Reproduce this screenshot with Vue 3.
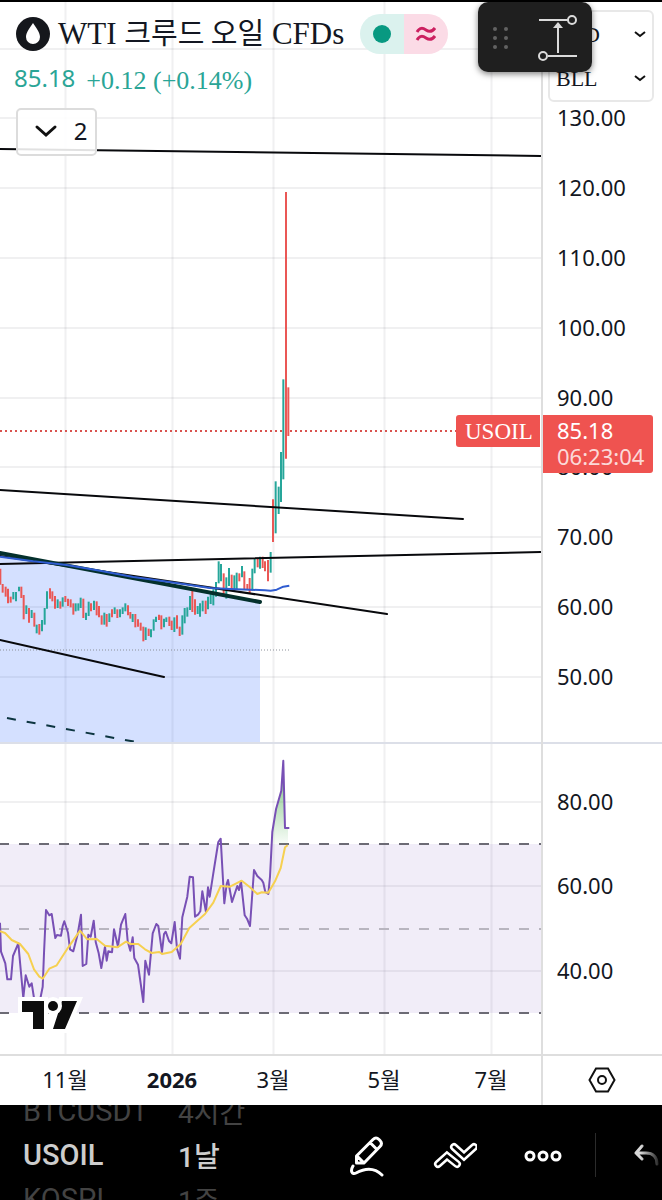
<script setup>
const prices = [130, 120, 110, 100, 90, 80, 70, 60, 50]
const priceY = (p) => Math.round(118.4 + (130 - p) * 6.98)
const rsiLevels = [80, 60, 40]
const rsiY = (v) => Math.round(844 + (70 - v) * 4.23)
const months = [
  { x: 65, label: '11월' },
  { x: 172, label: '2026', strong: true },
  { x: 273, label: '3월' },
  { x: 384, label: '5월' },
  { x: 491, label: '7월' },
]

// Series samples are stored in thirds of a chart unit, relative to an origin.
const bars = (text, ox, oy) =>
  text.split(';').map((row) => {
    const [side, x, high, low] = row.trim().split(' ')
    return { up: side === 'g', x: ox + x / 3, high: oy + high / 3, low: oy + low / 3 }
  })
const points = (text, ox, oy) =>
  text.trim().split(' ').map((p) => {
    const [x, y] = p.split(',').map(Number)
    return `${(ox + x / 3).toFixed(1)},${(oy + y / 3).toFixed(1)}`
  })

const candles = [
  ...bars('r 1 116 164;r 8 162 188;r 17 170 200;r 24 176 220;r 32 200 218;g 40 186 208;g 48 186 214;g 57 170 184;r 64 170 204;r 71 195 268;g 79 226 252;r 87 234 278;g 95 240 264;r 103 248 290;g 110 284 310;r 118 282 314;g 126 270 304;g 134 234 284;g 141 184 236;r 150 175 206;r 157 184 214;r 165 198 236;g 173 208 234;r 181 214 236;g 188 202 230;r 196 198 216;r 204 206 228;r 212 208 232;r 220 220 254;g 227 220 244;g 235 220 242;g 242 203 234;r 250 206 264;g 258 248 270;g 266 215 258;r 273 220 244;g 282 212 240;r 290 214 256;r 297 228 262;r 305 256 284;g 313 248 284;r 320 252 290;g 328 250 276;r 336 238 262;g 344 232 252;r 352 238 264;g 360 238 262;g 368 232 252;g 376 220 244;r 384 226 256;r 391 246 266;g 398 252 276;r 406 252 292;r 414 268 290;r 422 278 302;r 430 290 334;g 437 292 330;r 446 296 318', 0, 530),
  ...bars('g 3 298 322;g 11 268 302;g 18 260 276;r 27 254 270;r 34 256 298;g 42 266 292;g 49 262 276;r 58 260 288;r 65 272 300;g 73 262 306;r 81 256 296;r 89 290 318;g 97 256 314;g 104 234 280;g 112 232 260;g 120 198 240;r 127 182 246;r 135 208 254;g 143 228 252;g 150 220 260;g 158 212 244;r 167 212 252;g 174 200 238;g 182 190 222;g 190 178 226;g 198 156 200;g 206 94 160;g 213 102 154;r 221 130 198;g 229 142 206;g 237 114 168;r 245 134 182;g 253 136 182;g 260 128 180;r 268 130 154;g 276 108 142;r 283 124 178;r 292 162 180;r 299 144 190;g 307 116 182;g 314 86 130;r 323 84 112;g 330 80 116;r 338 80 114;r 345 94 124;r 354 90 154;g 362 66 128', 150, 530),
  ...bars('r 219 958 1086;g 227 904 1060;g 236 920 1002;g 243 816 966;g 250 598 898;r 258 36 836;r 265 622 768', 200, 180),
]

const average = [
  ...points('0,80 100,94 200,105 300,122 400,141', 0, 530),
  ...points('0,148 100,162 180,174 240,177 300,179 345,181 362,182 380,179 400,170 418,167', 150, 530),
].join(' ')

const rsi = [
  ...points('0,248 3,335 16,370 22,418 33,418 39,348 55,310 70,474 77,406 88,440 95,430 102,474 108,500 118,490 122,470 128,440 132,340 138,210 148,226 155,222 166,294 171,285 183,287 188,258 193,244 204,278 210,328 220,334 233,282 243,224 248,378 259,372 265,284 272,290 281,242 287,306 296,340 304,384 315,320 320,362 325,334 336,337 342,268 354,320 363,254 376,222 383,304 391,332 398,292 403,354 414,374 430,486 436,362 447,404', 0, 840),
  ...points('8,550 19,522 25,528 36,606 42,552 47,545 57,573 64,580 74,516 81,596 90,626 97,502 112,440 119,380 129,382 135,500 144,494 151,484 157,424 168,486 174,412 179,440 190,370 205,276 212,266 223,460 230,402 234,390 246,456 262,408 267,420 273,394 284,496 291,506 300,528 312,360 322,378 335,390 340,398 346,426 355,432 360,380 367,246 378,178 394,122 400,32 405,234 418,234', 150, 750),
].join(' ')

const rsiAverage = [
  ...points('0,274 15,279 35,300 60,312 85,342 102,388 118,410 128,416 148,386 170,376 205,322 240,272 262,298 290,297 315,317 340,320 352,322 378,305 392,312 415,312 435,328', 0, 840),
  ...points('5,609 28,606 36,612 65,606 92,582 118,534 165,492 190,458 212,408 240,410 275,392 300,412 322,432 335,427 355,428 375,394 392,354 405,292 413,286', 150, 750),
].join(' ')

const overbought = points('364,282 367,246 378,178 394,122 400,32 405,234 414,234 414,282', 150, 750).join(' ')
</script>

<template>
  <div class="app">
    <main class="board">
      <svg class="chart" viewBox="0 0 662 1103" role="img" aria-label="WTI 크루드 오일 CFDs">
        <defs>
          <linearGradient id="heat" x1="0" y1="0" x2="0" y2="1">
            <stop offset="0" stop-color="#4caf50" stop-opacity=".8" />
            <stop offset="1" stop-color="#4caf50" stop-opacity=".04" />
          </linearGradient>
          <clipPath id="plot"><rect x="0" y="0" width="541" height="1054" /></clipPath>
        </defs>
        <g transform="translate(0 -2)">
          <g clip-path="url(#plot)">
            <g class="grid">
              <line v-for="m in months" :key="m.x" :x1="m.x + .5" :x2="m.x + .5" y1="0" y2="1054" />
              <line v-for="p in prices" :key="p" x1="0" x2="541" :y1="priceY(p)" :y2="priceY(p)" />
              <line x1="0" x2="541" y1="49" y2="49" />
              <line v-for="v in rsiLevels" :key="v" x1="0" x2="541" :y1="rsiY(v)" :y2="rsiY(v)" />
            </g>
            <polygon class="zone" points="0,553 260,602 260,743 0,743" />
            <line class="low-dots" x1="0" y1="650" x2="290" y2="650" />
            <line class="price-dots" x1="0" y1="431" x2="456" y2="431" />
            <g>
              <line v-for="(c, i) in candles" :key="i" :class="c.up ? 'up' : 'down'" :x1="c.x" :x2="c.x" :y1="c.high" :y2="c.low" />
            </g>
            <g class="trend">
              <line x1="0" y1="149" x2="541" y2="156" />
              <line x1="0" y1="490" x2="463" y2="519" />
              <line x1="0" y1="564" x2="541" y2="552" />
              <line x1="0" y1="556" x2="387" y2="614" />
              <line x1="0" y1="640" x2="164" y2="677" />
              <line class="dash" x1="7" y1="718" x2="136" y2="742" />
            </g>
            <line class="thick" x1="0" y1="553" x2="260" y2="602" />
            <polyline class="average" :points="average" />

            <rect class="band" x="0" y="844" width="541" height="169" />
            <line class="limit" x1="-11" x2="541" y1="844" y2="844" />
            <line class="limit mid" x1="-11" x2="541" y1="929" y2="929" />
            <line class="limit" x1="-11" x2="541" y1="1013" y2="1013" />
            <polygon class="heat" :points="overbought" />
            <polyline class="rsi" :points="rsi" />
            <polyline class="rsi-average" :points="rsiAverage" />
          </g>

          <line class="split" x1="0" x2="662" y1="743" y2="743" />
          <line class="edge" x1="0" x2="662" y1="1055" y2="1055" />
          <line class="edge" x1="542" x2="542" y1="0" y2="1105" />

          <g class="axis">
            <text v-for="p in prices" :key="p" x="557" :y="priceY(p) + 8">{{ p.toFixed(2) }}</text>
            <text v-for="v in rsiLevels" :key="v" x="557" :y="rsiY(v) + 8">{{ v.toFixed(2) }}</text>
            <text v-for="m in months" :key="m.x" class="month" :class="{ strong: m.strong }" :x="m.x" y="1088">{{ m.label }}</text>
          </g>

          <path class="tag" d="M540 415v32h-81a3 3 0 0 1-3-3v-26a3 3 0 0 1 3-3z" />
          <path class="tag" d="M543 415h107a3 3 0 0 1 3 3v52a3 3 0 0 1-3 3h-107z" />
          <text class="tag-name" x="465" y="439">USOIL</text>
          <text class="tag-price" x="557" y="439">85.18</text>
          <text class="tag-price soft" x="557" y="465">06:23:04</text>

          <g class="brand">
            <path d="M22 1001h22v28h-11v-17h-11zM62 1001h15l-12 28h-12z" />
            <circle cx="53" cy="1006" r="5" />
          </g>
        </g>
      </svg>

      <header class="legend">
        <div class="title-row">
          <svg class="drop" viewBox="0 0 34 34" aria-hidden="true">
            <circle cx="17" cy="17" r="17" fill="#15171c" />
            <path d="M17 6c3 5 7 9 7 14a7 7 0 0 1-14 0c0-5 4-9 7-14z" fill="#fff" />
          </svg>
          <h1>WTI <span>크루드 오일</span> CFDs</h1>
          <div class="status">
            <span class="open"><i></i></span>
            <span class="delayed">
              <svg viewBox="0 0 22 18" aria-hidden="true"><path d="M2 7c3-5 6-4 9-2s6 2 9-2M2 15c3-5 6-4 9-2s6 2 9-2" /></svg>
            </span>
          </div>
        </div>
        <p class="quote"><span class="last">85.18</span><span class="change">+0.12 (+0.14%)</span></p>
        <button class="collapse" type="button">
          <svg viewBox="0 0 24 14" aria-hidden="true"><path d="M3 3l9 8 9-8" /></svg>2
        </button>
      </header>

      <div class="units">
        <label>
          <select aria-label="통화"><option>USD</option></select>
          <svg viewBox="0 0 12 8" aria-hidden="true"><path d="M1 2l5 4 5-4" /></svg>
        </label>
        <label>
          <select aria-label="단위"><option>BLL</option></select>
          <svg viewBox="0 0 12 8" aria-hidden="true"><path d="M1 2l5 4 5-4" /></svg>
        </label>
      </div>

      <div class="float">
        <svg class="grip" viewBox="0 0 16 24" aria-hidden="true">
          <g fill="#626262">
            <circle cx="3" cy="3" r="2" /><circle cx="14" cy="3" r="2" />
            <circle cx="3" cy="12" r="2" /><circle cx="14" cy="12" r="2" />
            <circle cx="3" cy="21" r="2" /><circle cx="14" cy="21" r="2" />
          </g>
        </svg>
        <button type="button" aria-label="가격 범위">
          <svg viewBox="0 0 40 46" aria-hidden="true">
            <g fill="none" stroke="#dbdbdb" stroke-width="2">
              <path d="M1 5h29M10 41h29M20 38V10" />
              <circle cx="34" cy="5" r="4" /><circle cx="5" cy="41" r="4" />
            </g>
            <path d="M20 7l5 6H15z" fill="#dbdbdb" />
          </svg>
        </button>
      </div>

      <button class="settings" type="button" aria-label="설정">
        <svg viewBox="0 0 28 26" aria-hidden="true">
          <path d="M8 1.500h12L26.500 13 20 24.500H8L1.500 13z" /><circle cx="14" cy="13" r="4" />
        </svg>
      </button>
    </main>

    <footer class="toolbar">
      <div class="wheel symbols">
        <button type="button">BTCUSDT</button>
        <button type="button" class="current">USOIL</button>
        <button type="button">KOSPI</button>
      </div>
      <div class="wheel">
        <button type="button">4시간</button>
        <button type="button" class="current">1날</button>
        <button type="button">1주</button>
      </div>
      <div class="tools">
        <button type="button" aria-label="그리기">
          <svg width="36" height="42" viewBox="0 0 36 42">
            <path d="M7.500 21L24 4.500q3-3 6 0l1 1q3 3 0 6L15 28H7.500zM21 7.500l7 7M8 21l7 7M4 31c-3 5-1 9 3 7 9-5 18-6 26 2" />
          </svg>
        </button>
        <button type="button" aria-label="지표">
          <svg class="waves" width="44" height="28" viewBox="0 0 44 28">
            <path class="outer" d="M5 22l9-8 10 8" /><path class="inner" d="M5 22l9-8 10 8" />
            <path class="outer" d="M21 5l10 9 10-9" /><path class="inner" d="M21 5l10 9 10-9" />
          </svg>
        </button>
        <button type="button" aria-label="더보기">
          <svg width="38" height="14" viewBox="0 0 38 14">
            <circle cx="6" cy="7" r="4" /><circle cx="19" cy="7" r="4" /><circle cx="32" cy="7" r="4" />
          </svg>
        </button>
      </div>
      <div class="history">
        <button type="button" aria-label="실행 취소">
          <svg width="26" height="22" viewBox="0 0 26 22">
            <defs>
              <linearGradient id="fade" gradientUnits="userSpaceOnUse" x1="0" y1="0" x2="26" y2="0">
                <stop offset=".3" stop-color="#d8d8d8" /><stop offset="1" stop-color="#222" />
              </linearGradient>
            </defs>
            <path class="undo" d="M9 2L3 9l6 6M3 9h10c7 0 11 4 11 11" />
          </svg>
        </button>
      </div>
    </footer>
  </div>
</template>

<style>
body { margin: 0; background: #000; }
</style>

<style scoped>
.app { display: flex; flex-direction: column; min-height: 100vh; background: #000; color: #131722; font-family: "Noto Sans", "Noto Sans CJK KR", sans-serif; box-sizing: border-box; padding-top: 2px; }
button { border: 0; padding: 0; background: none; color: inherit; font: inherit; display: flex; align-items: center; justify-content: center; }
.board { position: relative; background: #fff; }
.chart { display: block; width: 100%; height: auto; }
.grid line { stroke: #2a2e39; stroke-opacity: .07; stroke-width: 2; }
.zone { fill: #2962ff; fill-opacity: .2; }
.up, .down { stroke-width: 2; }
.up { stroke: #26a69a; }
.down { stroke: #ea5755; }
.low-dots { stroke: #8b9099; stroke-width: 1; stroke-dasharray: 1 2; }
.price-dots { stroke: #d9544f; stroke-width: 2; stroke-dasharray: 2 3; }
.trend line { stroke: #08090c; stroke-width: 2; stroke-linecap: round; }
.trend .dash { stroke: #0c3540; stroke-dasharray: 9 11; stroke-linecap: butt; }
.thick { stroke: #04302c; stroke-width: 4; stroke-linecap: round; }
.average { fill: none; stroke: #2f5cd0; stroke-width: 2; stroke-linejoin: round; }
.band { fill: #7e57c2; fill-opacity: .11; }
.limit { stroke: #6c6b75; stroke-width: 2; stroke-dasharray: 10 10; stroke-dashoffset: -10; }
.limit.mid { stroke: #b8b5bf; }
.heat { fill: url(#heat); }
.rsi, .rsi-average { fill: none; stroke: #7850b5; stroke-width: 2; stroke-linejoin: round; }
.rsi-average { stroke: #f6d050; }
.split { stroke: #dcdfe8; stroke-width: 2; }
.edge { stroke: #dedede; stroke-width: 2; }
.axis { font-size: 22px; fill: #131722; }
.month { text-anchor: middle; }
.strong { font-weight: 700; }
.tag { fill: #ef5350; }
.tag-name { font-family: "Liberation Serif", serif; font-size: 23px; fill: #fff; }
.tag-price { font-size: 22px; fill: #fff; }
.soft { fill-opacity: .8; }
.brand { fill: #0d0d0d; stroke: #fff; stroke-width: 8; paint-order: stroke; }

.legend { position: absolute; top: 12px; left: 16px; }
.title-row { display: flex; align-items: center; height: 40px; }
.drop { width: 34px; height: 34px; margin-right: 8px; }
h1 { margin: 0; font: 400 31px/40px "Liberation Serif", "Noto Sans CJK KR", serif; white-space: nowrap; }
h1 span { font-family: "Noto Sans CJK KR", sans-serif; font-size: 29px; line-height: 1; }
.status { display: flex; width: 88px; height: 40px; margin-left: 16px; border-radius: 20px; overflow: hidden; }
.status span { flex: 1; display: flex; align-items: center; justify-content: center; }
.open { background: #dbf2ee; }
.open i { width: 18px; height: 18px; border-radius: 50%; background: #089981; }
.delayed { background: #fbdbe6; }
.delayed svg { width: 22px; height: 18px; fill: none; stroke: #cc2060; stroke-width: 3; }
.quote { display: flex; align-items: center; margin: 10px 0; height: 34px; color: #2aa596; }
.last { font-size: 24px; line-height: 34px; margin: -6px 11px 0 -2px; }
.change { font: 26px/34px "Liberation Serif", serif; }
.collapse { box-sizing: border-box; width: 81px; height: 48px; gap: 16px; padding-left: 8px; border: 2px solid #dcdcdc; border-radius: 5px; background: rgba(255, 255, 255, .88); font-size: 24px; line-height: 40px; padding-bottom: 2px; }
.collapse svg { width: 24px; height: 14px; fill: none; stroke: #111; stroke-width: 3; stroke-linecap: round; }

.units { position: absolute; top: 8px; right: 8px; box-sizing: border-box; width: 106px; height: 92px; border: 2px solid #e8e8e8; border-radius: 6px; background: #fff; }
.units label { display: flex; align-items: center; height: 44px; padding: 0 6px; }
.units select { flex: 1; min-width: 0; appearance: none; border: 0; padding: 0; background: none; color: #131722; font: 22px "Liberation Serif", serif; }
.units svg { width: 12px; height: 8px; fill: none; stroke: #111; stroke-width: 2; }

.float { position: absolute; top: 0; right: 70px; display: flex; align-items: center; gap: 30px; box-sizing: border-box; width: 114px; height: 70px; padding: 2px 0 0 14px; border-radius: 10px; background: #1f1f1f; box-shadow: 0 2px 6px rgba(0, 0, 0, .5); }
.grip { width: 16px; height: 24px; }
.float button svg { width: 40px; height: 46px; }
.settings { position: absolute; right: 46px; bottom: 12px; }
.settings svg { width: 28px; height: 26px; fill: none; stroke: #111; stroke-width: 2; }

.toolbar { display: flex; height: 95px; flex: none; color: #cdcdcd; overflow: hidden; }
.wheel { display: flex; flex-direction: column; height: 132px; margin-top: -16px; width: 170px; font-family: Roboto, "Noto Sans CJK KR", sans-serif; font-size: 28px; }
.wheel button { height: 44px; justify-content: flex-start; color: #434343; white-space: nowrap; }
.wheel .current { color: #cdcdcd; font-weight: 500; }
.symbols { width: 155px; padding-left: 23px; font-size: 29px; }
.symbols button:first-child { width: 121px; overflow: hidden; }
.tools { flex: 1; display: flex; align-items: center; justify-content: space-between; height: 101px; padding-left: 1px; }
.toolbar svg { fill: none; stroke: #fff; stroke-width: 3; stroke-linejoin: round; stroke-linecap: round; }
.toolbar .waves { stroke-linejoin: miter; }
.waves .outer { stroke-width: 8; }
.waves .inner { stroke: #000; stroke-width: 3; }
.history { display: flex; align-items: center; justify-content: flex-end; box-sizing: border-box; width: 67px; height: 44px; margin: 28px 0 0 33px; padding-right: 3px; border-left: 1px solid #2b2b2b; }
.toolbar .undo { stroke: url(#fade); }
</style>
